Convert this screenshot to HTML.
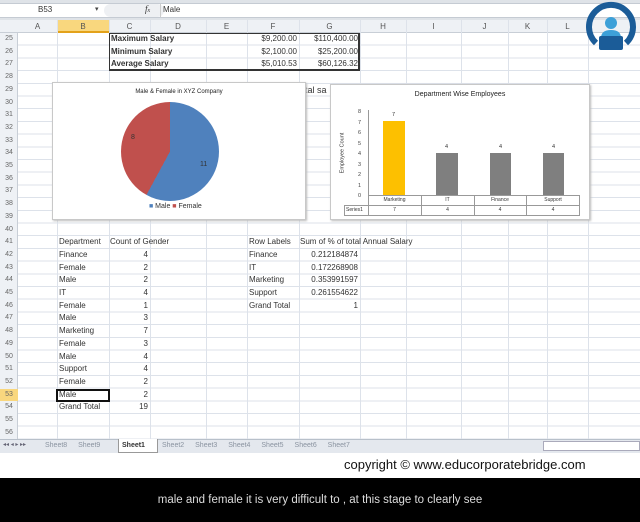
<!DOCTYPE html>
<html><head><meta charset="utf-8"><style>
*{margin:0;padding:0;box-sizing:border-box}
body{width:640px;height:522px;position:relative;overflow:hidden;background:#fff;font-family:"Liberation Sans",sans-serif;font-size:8px;color:#333}
.a{position:absolute;white-space:nowrap}
.vl{position:absolute;top:20px;height:420px;width:1px;background:#dde2ea}
.ch{position:absolute;top:20px;height:13px;font-size:8px;color:#555;text-align:center;line-height:13px}
.rn{position:absolute;left:0;width:18px;font-size:7px;color:#666;text-align:center;line-height:12.7px;height:12.7px}
.t{position:absolute;font-size:8px;line-height:12.7px;height:12.7px;color:#333}
.r{text-align:right}
</style></head><body>
<div class="a" style="left:0;top:0;width:640px;height:20px;background:#dfe3e8"></div>
<div class="a" style="left:0;top:3px;width:640px;height:15px;background:#fff;border-top:1px solid #c5cbd3;border-bottom:1px solid #c5cbd3"></div>
<div class="a" style="left:38px;top:5px;font-size:8px;color:#333">B53</div>
<div class="a" style="left:95px;top:5px;font-size:7px;color:#444">▾</div>
<div class="a" style="left:104px;top:4px;width:60px;height:13px;border-radius:7px;background:#eef0f3"></div>
<div class="a" style="left:145px;top:4px;font-size:9px;font-style:italic;font-family:'Liberation Serif',serif">f<span style="font-size:6px">x</span></div>
<div class="a" style="left:160px;top:4px;width:1px;height:13px;background:#ccc"></div>
<div class="a" style="left:163px;top:5px;font-size:8px;color:#333">Male</div>
<div class="a" style="left:0;top:20px;width:640px;height:13px;background:#eef1f5;border-bottom:1px solid #c8ced6"></div>
<div class="a" style="left:57px;top:20px;width:52px;height:13px;background:#f9d77e;border-bottom:2px solid #e3a21a"></div>
<div class="a" style="left:0;top:33px;width:18px;height:407px;background:#eef1f5;border-right:1px solid #c8ced6"></div>
<div class="a" style="left:18px;top:33px;width:622px;height:407px;background:repeating-linear-gradient(to bottom,transparent 0,transparent 11.7px,#dde2ea 11.7px,#dde2ea 12.7px)"></div>
<div class="vl" style="left:57px"></div><div class="vl" style="left:109px"></div><div class="vl" style="left:150px"></div><div class="vl" style="left:206px"></div><div class="vl" style="left:247px"></div><div class="vl" style="left:299px"></div><div class="vl" style="left:360px"></div><div class="vl" style="left:406px"></div><div class="vl" style="left:461px"></div><div class="vl" style="left:508px"></div><div class="vl" style="left:547px"></div><div class="vl" style="left:588px"></div>
<div class="ch" style="left:18px;width:39px">A</div><div class="ch" style="left:57px;width:52px">B</div><div class="ch" style="left:109px;width:41px">C</div><div class="ch" style="left:150px;width:56px">D</div><div class="ch" style="left:206px;width:41px">E</div><div class="ch" style="left:247px;width:52px">F</div><div class="ch" style="left:299px;width:61px">G</div><div class="ch" style="left:360px;width:46px">H</div><div class="ch" style="left:406px;width:55px">I</div><div class="ch" style="left:461px;width:47px">J</div><div class="ch" style="left:508px;width:39px">K</div><div class="ch" style="left:547px;width:41px">L</div>
<div class="rn" style="top:33px">25</div><div class="rn" style="top:45.7px">26</div><div class="rn" style="top:58.4px">27</div><div class="rn" style="top:71.1px">28</div><div class="rn" style="top:83.8px">29</div><div class="rn" style="top:96.5px">30</div><div class="rn" style="top:109.2px">31</div><div class="rn" style="top:121.9px">32</div><div class="rn" style="top:134.6px">33</div><div class="rn" style="top:147.3px">34</div><div class="rn" style="top:160px">35</div><div class="rn" style="top:172.7px">36</div><div class="rn" style="top:185.4px">37</div><div class="rn" style="top:198.1px">38</div><div class="rn" style="top:210.8px">39</div><div class="rn" style="top:223.5px">40</div><div class="rn" style="top:236.2px">41</div><div class="rn" style="top:248.9px">42</div><div class="rn" style="top:261.6px">43</div><div class="rn" style="top:274.3px">44</div><div class="rn" style="top:287px">45</div><div class="rn" style="top:299.7px">46</div><div class="rn" style="top:312.4px">47</div><div class="rn" style="top:325.1px">48</div><div class="rn" style="top:337.8px">49</div><div class="rn" style="top:350.5px">50</div><div class="rn" style="top:363.2px">51</div><div class="rn" style="top:375.9px">52</div><div class="rn" style="top:388.6px;background:#f9d77e">53</div><div class="rn" style="top:401.3px">54</div><div class="rn" style="top:414px">55</div><div class="rn" style="top:426.7px">56</div>
<div class="a" style="left:109px;top:33px;width:251px;height:38px;border:1px solid #333;border-bottom-width:2px;border-right-width:2px"></div>
<div class="t" style="left:111px;top:33px;font-weight:bold">Maximum Salary</div>
<div class="t" style="left:111px;top:45.7px;font-weight:bold">Minimum Salary</div>
<div class="t" style="left:111px;top:58.4px;font-weight:bold">Average Salary</div>
<div class="t r" style="left:247px;width:50px;top:33px">$9,200.00</div><div class="t r" style="left:299px;width:59px;top:33px">$110,400.00</div>
<div class="t r" style="left:247px;width:50px;top:45.7px">$2,100.00</div><div class="t r" style="left:299px;width:59px;top:45.7px">$25,200.00</div>
<div class="t r" style="left:247px;width:50px;top:58.4px">$5,010.53</div><div class="t r" style="left:299px;width:59px;top:58.4px">$60,126.32</div>
<div class="t" style="left:300px;top:83.8px;font-size:9px">otal sa</div>
<!-- pie chart -->
<div class="a" style="left:52px;top:82px;width:254px;height:138px;background:#fff;border:1px solid #c8c8c8;box-shadow:1px 1px 2px #bbb"></div>
<div class="a" style="left:52px;top:89px;width:254px;text-align:center;font-size:6px;color:#222">Male &amp; Female in XYZ Company</div>
<div class="a" style="left:121px;top:102px;width:98px;height:99px;border-radius:50%;background:conic-gradient(#4f81bd 0 57.9%,#c0504d 57.9% 100%)"></div>
<div class="a" style="left:131px;top:134px;font-size:7px">8</div>
<div class="a" style="left:200px;top:161px;font-size:7px">11</div>
<div class="a" style="left:149px;top:203px;font-size:7px;color:#333"><span style="color:#4f81bd">■</span> Male <span style="color:#c0504d">■</span> Female</div>
<!-- bar chart -->
<div class="a" style="left:330px;top:84px;width:260px;height:136px;background:#fff;border:1px solid #c8c8c8;box-shadow:1px 1px 2px #bbb"></div>
<div class="a" style="left:330px;top:91px;width:260px;text-align:center;font-size:7px;color:#222">Department Wise Employees</div>
<div class="a" style="left:322px;top:150px;font-size:5.5px;transform:rotate(-90deg);color:#333">Employee Count</div>
<div class="a" style="left:368px;top:110px;width:1px;height:85px;background:#999"></div>
<div class="a" style="left:358px;top:107px;font-size:5.5px;line-height:10.5px;color:#444">8<br>7<br>6<br>5<br>4<br>3<br>2<br>1<br>0</div>
<div class="a" style="left:383px;top:121px;width:22px;height:74px;background:#fdc000"></div>
<div class="a" style="left:436px;top:153px;width:22px;height:42px;background:#7f7f7f"></div>
<div class="a" style="left:490px;top:153px;width:21px;height:42px;background:#7f7f7f"></div>
<div class="a" style="left:543px;top:153px;width:21px;height:42px;background:#7f7f7f"></div>
<div class="a" style="left:392px;top:112px;font-size:5.5px">7</div><div class="a" style="left:445px;top:144px;font-size:5.5px">4</div><div class="a" style="left:499px;top:144px;font-size:5.5px">4</div><div class="a" style="left:552px;top:144px;font-size:5.5px">4</div>
<div class="a" style="left:368px;top:195px;width:212px;height:21px;border:1px solid #999;background:linear-gradient(#999,#999) 0 9px/100% 1px no-repeat"></div>
<div class="a" style="left:344px;top:205px;width:25px;height:11px;border:1px solid #999;border-right:none"></div>
<div class="a" style="left:421px;top:195px;width:1px;height:21px;background:#999"></div><div class="a" style="left:474px;top:195px;width:1px;height:21px;background:#999"></div><div class="a" style="left:526px;top:195px;width:1px;height:21px;background:#999"></div>
<div class="a" style="left:368px;top:197px;width:53px;text-align:center;font-size:5px">Marketing</div><div class="a" style="left:421px;top:197px;width:53px;text-align:center;font-size:5px">IT</div><div class="a" style="left:474px;top:197px;width:52px;text-align:center;font-size:5px">Finance</div><div class="a" style="left:526px;top:197px;width:54px;text-align:center;font-size:5px">Support</div>
<div class="a" style="left:346px;top:207px;font-size:5px">Series1</div>
<div class="a" style="left:368px;top:207px;width:53px;text-align:center;font-size:5px">7</div><div class="a" style="left:421px;top:207px;width:53px;text-align:center;font-size:5px">4</div><div class="a" style="left:474px;top:207px;width:52px;text-align:center;font-size:5px">4</div><div class="a" style="left:526px;top:207px;width:54px;text-align:center;font-size:5px">4</div>
<!-- pivot 1 -->
<div class="t" style="left:59px;top:236.2px">Department</div><div class="t" style="left:110px;top:236.2px">Count of Gender</div>
<div class="t" style="left:59px;top:248.9px">Finance</div><div class="t r" style="left:109px;width:39px;top:248.9px">4</div>
<div class="t" style="left:59px;top:261.6px">Female</div><div class="t r" style="left:109px;width:39px;top:261.6px">2</div>
<div class="t" style="left:59px;top:274.3px">Male</div><div class="t r" style="left:109px;width:39px;top:274.3px">2</div>
<div class="t" style="left:59px;top:287px">IT</div><div class="t r" style="left:109px;width:39px;top:287px">4</div>
<div class="t" style="left:59px;top:299.7px">Female</div><div class="t r" style="left:109px;width:39px;top:299.7px">1</div>
<div class="t" style="left:59px;top:312.4px">Male</div><div class="t r" style="left:109px;width:39px;top:312.4px">3</div>
<div class="t" style="left:59px;top:325.1px">Marketing</div><div class="t r" style="left:109px;width:39px;top:325.1px">7</div>
<div class="t" style="left:59px;top:337.8px">Female</div><div class="t r" style="left:109px;width:39px;top:337.8px">3</div>
<div class="t" style="left:59px;top:350.5px">Male</div><div class="t r" style="left:109px;width:39px;top:350.5px">4</div>
<div class="t" style="left:59px;top:363.2px">Support</div><div class="t r" style="left:109px;width:39px;top:363.2px">4</div>
<div class="t" style="left:59px;top:375.9px">Female</div><div class="t r" style="left:109px;width:39px;top:375.9px">2</div>
<div class="a" style="left:56px;top:388.6px;width:54px;height:13px;border:2px solid #111"></div>
<div class="t" style="left:59px;top:388.6px">Male</div><div class="t r" style="left:109px;width:39px;top:388.6px">2</div>
<div class="t" style="left:59px;top:401.3px">Grand Total</div><div class="t r" style="left:109px;width:39px;top:401.3px">19</div>
<!-- pivot 2 -->
<div class="t" style="left:249px;top:236.2px">Row Labels</div><div class="t" style="left:300px;top:236.2px">Sum of % of total Annual Salary</div>
<div class="t" style="left:249px;top:248.9px">Finance</div><div class="t r" style="left:299px;width:59px;top:248.9px">0.212184874</div>
<div class="t" style="left:249px;top:261.6px">IT</div><div class="t r" style="left:299px;width:59px;top:261.6px">0.172268908</div>
<div class="t" style="left:249px;top:274.3px">Marketing</div><div class="t r" style="left:299px;width:59px;top:274.3px">0.353991597</div>
<div class="t" style="left:249px;top:287px">Support</div><div class="t r" style="left:299px;width:59px;top:287px">0.261554622</div>
<div class="t" style="left:249px;top:299.7px">Grand Total</div><div class="t r" style="left:299px;width:59px;top:299.7px">1</div>
<!-- tabs -->
<div class="a" style="left:0;top:439px;width:640px;height:14px;background:#e4e8ee;border-top:1px solid #b8c0ca"></div>
<div class="a" style="left:3px;top:441px;font-size:6px;color:#667">◂◂ ◂ ▸ ▸▸</div>
<div class="a" style="left:45px;top:442px;font-size:7px;color:#8a93a0;word-spacing:9px">Sheet8 Sheet9</div>
<div class="a" style="left:118px;top:439px;width:40px;height:14px;background:#fff;border:1px solid #999;border-top:none"></div>
<div class="a" style="left:122px;top:442px;font-size:7px;font-weight:bold;color:#333">Sheet1</div>
<div class="a" style="left:162px;top:442px;font-size:7px;color:#8a93a0;word-spacing:9px">Sheet2 Sheet3 Sheet4 Sheet5 Sheet6 Sheet7</div>
<div class="a" style="left:543px;top:441px;width:97px;height:10px;background:#fff;border:1px solid #aab"></div>
<div class="a" style="left:344px;top:457px;font-size:13px;color:#111">copyright © www.educorporatebridge.com</div>
<div class="a" style="left:0;top:478px;width:640px;height:44px;background:#000"></div>
<div class="a" style="left:0;top:494px;width:640px;text-align:center;font-size:11.5px;color:#ddd">male and female it is very difficult to , at this stage to clearly see</div>
<svg class="a" style="left:584px;top:0" width="54" height="54" viewBox="0 0 54 54">
<path d="M12 43 A22 22 0 1 1 42 43" fill="none" stroke="#1b5c98" stroke-width="6"/>
<circle cx="27" cy="23" r="6" fill="#3da0d8"/>
<path d="M17 38 Q17 30 27 30 Q37 30 37 38 Z" fill="#3da0d8"/>
<rect x="15" y="36" width="24" height="14" rx="2" fill="#1b5c98"/>
</svg>
</body></html>
